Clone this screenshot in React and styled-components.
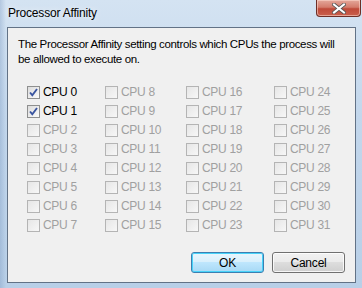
import React from 'react';
import styled, { createGlobalStyle } from 'styled-components';

const GlobalStyle = createGlobalStyle`
  html, body {
    margin: 0;
    padding: 0;
    background: #bcd2e8;
  }
  body {
    font-family: "Liberation Sans", Arial, sans-serif;
    font-size: 11.5px;
    letter-spacing: -0.35px;
  }
`;

const cpus = Array.from({ length: 32 }, (_, i) => i);
const checked = [0, 1];
const enabled = [0, 1];

const Check = ({ on, disabled }) => (
  <Box disabled={disabled}>
    {on && (
      <svg width="11" height="11" viewBox="0 0 11 11">
        <path d="M2 5.5 L4.3 8.2 L9 2" fill="none" stroke="#3a55a0" strokeWidth="1.9" />
      </svg>
    )}
  </Box>
);

const App = () => {
  return (
    <Window>
      <GlobalStyle />
      <TitleBar>
        <Title>Processor Affinity</Title>
        <CloseButton>
          <svg width="14" height="11" viewBox="0 0 14 11">
            <path d="M2 1.5 L12 9.5 M12 1.5 L2 9.5" stroke="#555" strokeWidth="3.6" strokeLinecap="square" />
            <path d="M2 1.5 L12 9.5 M12 1.5 L2 9.5" stroke="#fff" strokeWidth="2" strokeLinecap="square" />
          </svg>
        </CloseButton>
      </TitleBar>
      <Client>
        <Description>
          The Processor Affinity setting controls which CPUs the process will
          <br />
          be allowed to execute on.
        </Description>
        <Grid>
          {cpus.map((n) => {
            const disabled = !enabled.includes(n);
            return (
              <Item key={n}>
                <Check on={checked.includes(n)} disabled={disabled} />
                <Label disabled={disabled}>CPU {n}</Label>
              </Item>
            );
          })}
        </Grid>
        <ButtonRow>
          <Button primary>OK</Button>
          <Button>Cancel</Button>
        </ButtonRow>
      </Client>
    </Window>
  );
};

const Window = styled.div`
  width: 362px;
  height: 288px;
  box-sizing: border-box;
  display: flex;
  flex-direction: column;
  padding: 0 6px 5px 7px;
  background:
    linear-gradient(90deg, rgba(120, 150, 190, 0.35) 0px, rgba(255, 255, 255, 0) 6px),
    linear-gradient(180deg, #d4e3f2 0%, #c3d7ec 40%, #b8cfe7 100%);
  overflow: hidden;
`;

const TitleBar = styled.div`
  height: 27px;
  display: flex;
  justify-content: space-between;
  align-items: flex-start;
  flex-shrink: 0;
`;

const Title = styled.div`
  margin-top: 6px;
  margin-left: 1px;
  font-size: 12px;
  letter-spacing: -0.2px;
  color: #000;
  text-shadow: 0 0 6px rgba(255, 255, 255, 0.9);
`;

const CloseButton = styled.div`
  width: 45px;
  height: 17px;
  margin-right: -5px;
  box-sizing: border-box;
  border: 1px solid #6d2f27;
  border-top: none;
  border-radius: 0 0 4px 4px;
  background: linear-gradient(180deg, #e4a89b 0%, #d47c6c 45%, #bf4a39 55%, #c9604d 100%);
  box-shadow: inset 0 0 0 1px rgba(255, 220, 210, 0.55);
  display: flex;
  align-items: center;
  justify-content: center;
`;

const Client = styled.div`
  flex: 1;
  display: flex;
  flex-direction: column;
  background: #f0f0f0;
  border: 1px solid #627286;
  box-sizing: border-box;
`;

const Description = styled.div`
  padding: 9px 0 0 10px;
  line-height: 15px;
  color: #000;
  white-space: nowrap;
`;

const Grid = styled.div`
  display: grid;
  grid-template-columns: 78px 81px 88px 1fr;
  grid-template-rows: repeat(8, 19px);
  grid-auto-flow: column;
  margin: 19px 0 0 19px;
`;

const Item = styled.div`
  display: flex;
  align-items: center;
  height: 13px;
  gap: 3px;
`;

const Box = styled.div`
  width: 13px;
  height: 13px;
  box-sizing: border-box;
  border: 1px solid ${(p) => (p.disabled ? '#b4b4b4' : '#8e8f8f')};
  background: ${(p) =>
    p.disabled
      ? 'linear-gradient(135deg, #e6e6e6 0%, #f7f7f7 100%)'
      : 'linear-gradient(135deg, #dcdcdc 0%, #fbfbfb 100%)'};
  display: flex;
  align-items: center;
  justify-content: center;
`;

const Label = styled.span`
  color: ${(p) => (p.disabled ? '#a0a0a0' : '#000')};
  font-size: 12px;
  letter-spacing: -0.3px;
  line-height: 13px;
`;

const ButtonRow = styled.div`
  margin-top: auto;
  display: flex;
  justify-content: flex-end;
  gap: 8px;
  padding: 0 10px 9px 0;
`;

const Button = styled.div`
  width: 73px;
  height: 21px;
  box-sizing: border-box;
  border-radius: 3px;
  font-size: 12px;
  letter-spacing: -0.2px;
  border: 1px solid ${(p) => (p.primary ? '#3c7fb1' : '#707070')};
  background: ${(p) =>
    p.primary
      ? 'linear-gradient(180deg, #eaf6fd 0%, #d9f0fc 45%, #bee6fd 50%, #a7d9f5 100%)'
      : 'linear-gradient(180deg, #f2f2f2 0%, #ebebeb 45%, #dddddd 50%, #cfcfcf 100%)'};
  box-shadow: inset 0 0 0 1px ${(p) => (p.primary ? '#48d3f9' : 'rgba(255,255,255,0.8)')};
  display: flex;
  align-items: center;
  justify-content: center;
  color: #000;
`;

export default App;
